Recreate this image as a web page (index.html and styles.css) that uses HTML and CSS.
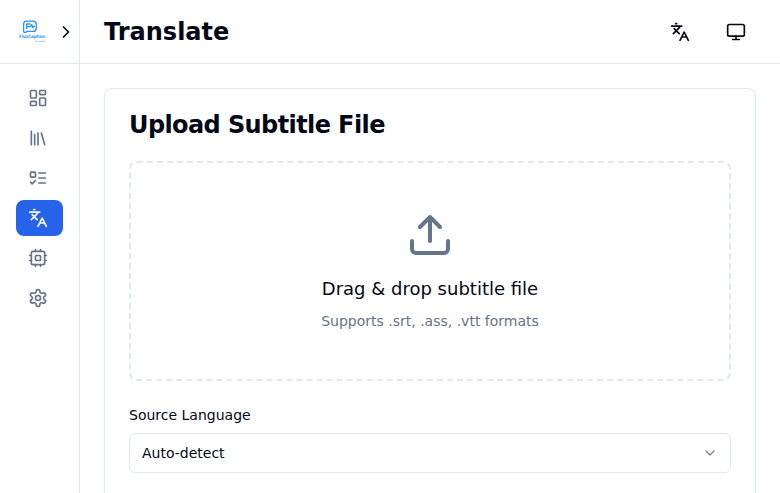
FILE: index.html
```html
<!DOCTYPE html>
<html lang="en">
<head>
<meta charset="utf-8">
<title>Translate</title>
<link rel="stylesheet" href="styles.css">
</head>
<body>
<svg class="defs" width="0" height="0">
  <symbol id="languages" viewBox="0 0 24 24"><path d="m5 8 6 6M4 14l6-6 2-3M2 5h12M7 2h1M22 22l-5-10-5 10M14 18h6"/></symbol>
</svg>
<div class="app">
  <aside class="sidebar">
    <div class="brand">
      <svg class="logo" viewBox="0 0 32 32">
        <path class="logo-line" d="M7.6 16.3V8.2a3 3 0 0 1 3-3h6.6a3 3 0 0 1 3 3v4.2a3 3 0 0 1-3 3H11.2L9.4 16.3H7.6"/>
        <path class="logo-mark" d="M10.7 13.2V8h3.8M10.7 10.6h3.8l1.2-2 1.2 3 .8-1.2h1.2"/>
        <text class="logo-name" x="3" y="22.3" textLength="26" lengthAdjust="spacingAndGlyphs">FluxCaption</text>
        <text class="logo-by" x="19.5" y="26" textLength="9.5" lengthAdjust="spacingAndGlyphs">by asahi</text>
      </svg>
      <button class="collapse" aria-label="Expand"><svg class="icon" viewBox="0 0 24 24"><path d="m9 18 6-6-6-6"/></svg></button>
    </div>
    <nav class="nav">
      <a class="item"><svg class="icon" viewBox="0 0 24 24"><rect width="7" height="9" x="3" y="3" rx="1"/><rect width="7" height="5" x="14" y="3" rx="1"/><rect width="7" height="9" x="14" y="12" rx="1"/><rect width="7" height="5" x="3" y="16" rx="1"/></svg></a>
      <a class="item"><svg class="icon" viewBox="0 0 24 24"><path d="m16 6 4 14M12 6v14M8 8v12M4 4v16"/></svg></a>
      <a class="item"><svg class="icon" viewBox="0 0 24 24"><rect x="3" y="5" width="6" height="6" rx="1"/><path d="m3 17 2 2 4-4M13 6h8M13 12h8M13 18h8"/></svg></a>
      <a class="item active"><svg class="icon"><use href="#languages"/></svg></a>
      <a class="item"><svg class="icon" viewBox="0 0 24 24"><rect width="16" height="16" x="4" y="4" rx="2"/><rect width="6" height="6" x="9" y="9" rx="1"/><path d="M15 2v2M15 20v2M2 15h2M2 9h2M20 15h2M20 9h2M9 2v2M9 20v2"/></svg></a>
      <a class="item"><svg class="icon" viewBox="0 0 24 24"><path d="M12.22 2h-.44a2 2 0 0 0-2 2v.18a2 2 0 0 1-1 1.73l-.43.25a2 2 0 0 1-2 0l-.15-.08a2 2 0 0 0-2.73.73l-.22.38a2 2 0 0 0 .73 2.73l.15.1a2 2 0 0 1 1 1.72v.51a2 2 0 0 1-1 1.74l-.15.09a2 2 0 0 0-.73 2.73l.22.38a2 2 0 0 0 2.73.73l.15-.08a2 2 0 0 1 2 0l.43.25a2 2 0 0 1 1 1.73V20a2 2 0 0 0 2 2h.44a2 2 0 0 0 2-2v-.18a2 2 0 0 1 1-1.73l.43-.25a2 2 0 0 1 2 0l.15.08a2 2 0 0 0 2.73-.73l.22-.39a2 2 0 0 0-.73-2.73l-.15-.08a2 2 0 0 1-1-1.74v-.5a2 2 0 0 1 1-1.74l.15-.09a2 2 0 0 0 .73-2.73l-.22-.38a2 2 0 0 0-2.73-.73l-.15.08a2 2 0 0 1-2 0l-.43-.25a2 2 0 0 1-1-1.73V4a2 2 0 0 0-2-2z"/><circle cx="12" cy="12" r="3"/></svg></a>
    </nav>
  </aside>
  <div class="page">
    <header class="header">
      <h1 class="title">Translate</h1>
      <div class="actions">
        <button class="action" aria-label="Language"><svg class="icon"><use href="#languages"/></svg></button>
        <button class="action" aria-label="Theme"><svg class="icon" viewBox="0 0 24 24"><rect width="20" height="14" x="2" y="3" rx="2"/><path d="M8 21h8M12 17v4"/></svg></button>
      </div>
    </header>
    <main class="content">
      <section class="card">
        <h2 class="card-title">Upload Subtitle File</h2>
        <div class="dropzone">
          <svg class="icon upload" viewBox="0 0 24 24"><path d="M21 15v4a2 2 0 0 1-2 2H5a2 2 0 0 1-2-2v-4M17 8l-5-5-5 5M12 3v12"/></svg>
          <p class="drop-text">Drag &amp; drop subtitle file</p>
          <p class="drop-hint">Supports .srt, .ass, .vtt formats</p>
        </div>
        <div class="label">Source Language</div>
        <button class="select"><span>Auto-detect</span><svg class="icon chevron" viewBox="0 0 24 24"><path d="m6 9 6 6 6-6"/></svg></button>
      </section>
    </main>
  </div>
</div>
</body>
</html>
```
FILE: styles.css
```css
* { box-sizing: border-box; margin: 0; padding: 0; }
body {
  font-family: "DejaVu Sans", sans-serif;
  font-size: 14px;
  line-height: 20px;
  color: #020817;
  background: #fff;
}
button { font: inherit; color: inherit; background: none; border: 0; }
.defs { display: none; }
.app { display: flex; height: 100vh; overflow: hidden; }
.icon {
  display: block;
  flex: none;
  width: 20px;
  height: 20px;
  fill: none;
  stroke: currentColor;
  stroke-width: 2;
  stroke-linecap: round;
  stroke-linejoin: round;
}
.sidebar { flex: none; width: 80px; border-right: 1px solid #e2e8f0; }
.brand {
  display: flex;
  align-items: center;
  justify-content: space-between;
  height: 64px;
  padding: 0 3px 0 16px;
  border-bottom: 1px solid #e2e8f0;
}
.logo { width: 32px; height: 32px; flex: none; overflow: visible; }
.logo-line, .logo-mark { fill: none; stroke: #1e96fc; stroke-linejoin: round; }
.logo-line { stroke-width: 1.3; }
.logo-mark { stroke-width: 1.3; }
.logo-name, .logo-by { font-family: "DejaVu Sans", sans-serif; fill: #1e96fc; }
.logo-name { font-size: 4.6px; font-weight: 700; }
.logo-by { font-size: 2.4px; }
.collapse { padding: 0; }
.nav { display: flex; flex-direction: column; gap: 4px; padding: 16px; }
.item {
  display: flex;
  align-items: center;
  height: 36px;
  padding: 0 12px;
  border-radius: 8px;
  color: #64748b;
}
.item.active { background: #2563eb; color: #f8fafc; }
.page { flex: 1; min-width: 0; }
.header {
  display: flex;
  align-items: center;
  justify-content: space-between;
  height: 64px;
  padding: 0 24px;
  border-bottom: 1px solid #e2e8f0;
}
.title { font-size: 24px; line-height: 32px; font-weight: 700; }
.actions { display: flex; gap: 16px; }
.action { display: flex; align-items: center; justify-content: center; width: 40px; height: 40px; }
.content { padding: 24px; }
.card {
  height: 560px;
  padding: 24px;
  border: 1px solid #e2e8f0;
  border-radius: 8px;
  box-shadow: 0 1px 2px rgba(0, 0, 0, 0.05);
}
.card-title { font-size: 24px; line-height: 24px; font-weight: 600; letter-spacing: -0.6px; margin-bottom: 24px; }
.dropzone {
  display: flex;
  flex-direction: column;
  align-items: center;
  padding: 48px;
  border: 2px dashed #e2e8f0;
  border-radius: 8px;
  margin-bottom: 24px;
}
.upload { width: 48px; height: 48px; color: #64748b; margin-bottom: 16px; }
.drop-text { font-size: 18px; line-height: 28px; margin-bottom: 8px; }
.drop-hint { color: #64748b; }
.label { margin-bottom: 8px; }
.select {
  display: flex;
  align-items: center;
  justify-content: space-between;
  width: 100%;
  height: 40px;
  padding: 0 12px;
  border: 1px solid #e2e8f0;
  border-radius: 6px;
}
.chevron { width: 16px; height: 16px; opacity: 0.5; }
```
